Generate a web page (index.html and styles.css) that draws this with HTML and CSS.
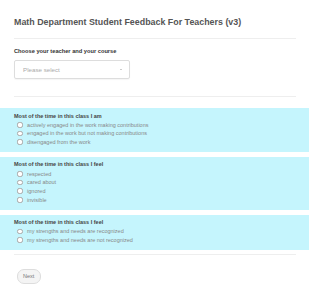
FILE: index.html
```html
<!DOCTYPE html>
<html>
<head>
<meta charset="utf-8">
<link rel="stylesheet" href="styles.css">
</head>
<body>
<div class="page">
  <h1 class="title">Math Department Student Feedback For Teachers (v3)</h1>
  <div class="divider first"></div>
  <div class="field">
    <div class="label">Choose your teacher and your course</div>
    <div class="select"><span class="placeholder">Please select</span><span class="caret"></span></div>
  </div>
  <div class="divider second"></div>
  <div class="sections">
    <div class="section">
      <div class="heading">Most of the time in this class I am</div>
      <div class="option"><span class="radio"></span>actively engaged in the work making contributions</div>
      <div class="option"><span class="radio"></span>engaged in the work but not making contributions</div>
      <div class="option"><span class="radio"></span>disengaged from the work</div>
    </div>
    <div class="section">
      <div class="heading">Most of the time in this class I feel</div>
      <div class="option"><span class="radio"></span>respected</div>
      <div class="option"><span class="radio"></span>cared about</div>
      <div class="option"><span class="radio"></span>ignored</div>
      <div class="option"><span class="radio"></span>invisible</div>
    </div>
    <div class="section">
      <div class="heading">Most of the time in this class I feel</div>
      <div class="option"><span class="radio"></span>my strengths and needs are recognized</div>
      <div class="option"><span class="radio"></span>my strengths and needs are not recognized</div>
    </div>
  </div>
  <div class="divider third"></div>
  <div class="actions"><span class="next">Next</span></div>
</div>
</body>
</html>
```
FILE: styles.css
```css
html, body { margin: 0; padding: 0; background: #fff; }
body { font-family: "Liberation Sans", Arial, sans-serif; }
.page { width: 310px; }
.title {
  margin: 16px 14px 0;
  font-size: 8.9px;
  line-height: 12px;
  font-weight: bold;
  color: #555;
}
.divider { height: 1px; background: #eee; margin-left: 14px; width: 282px; }
.divider.first { margin-top: 10px; }
.field { padding-left: 14px; }
.label {
  margin-top: 9px;
  font-size: 5.7px;
  line-height: 7px;
  font-weight: bold;
  color: #333;
}
.select {
  margin-top: 4.5px;
  height: 17px;
  border: 1px solid #ddd;
  border-radius: 2px;
  box-shadow: 0 1px 1px rgba(0,0,0,0.04);
  display: flex;
  align-items: center;
  justify-content: space-between;
  padding: 0 7px 0 8px;
  box-sizing: content-box;
  width: 99px;
}
.placeholder { font-size: 6.2px; color: #aaa; }
.caret {
  width: 0; height: 0;
  border-left: 1.2px solid transparent;
  border-right: 1.2px solid transparent;
  border-top: 1.5px solid #999;
}
.divider.second { margin-top: 17.5px; }
.sections { margin-top: 11px; display: flex; flex-direction: column; gap: 4.5px; }
.section {
  width: 309px;
  background: #c5f5fd;
  padding: 3.5px 0 6px 14px;
  box-sizing: border-box;
}
.heading {
  font-size: 5.5px;
  line-height: 9px;
  font-weight: bold;
  color: #444;
}
.option {
  display: flex;
  align-items: center;
  height: 8.67px;
  font-size: 5.5px;
  color: #888;
  padding-left: 3px;
}
.radio {
  width: 3.6px;
  height: 3.6px;
  border: 0.6px solid #aaa;
  border-radius: 40%;
  background: #fff;
  margin-right: 4.5px;
  flex: none;
}
.divider.third { margin-top: 4px; }
.actions { padding: 9px 0 0 16.5px; }
.next {
  display: inline-flex;
  align-items: center;
  justify-content: center;
  width: 22.5px;
  height: 13px;
  border: 0.6px solid #ddd;
  border-radius: 7px;
  background: #f4f4f4;
  font-size: 5.5px;
  color: #777;
}
```
